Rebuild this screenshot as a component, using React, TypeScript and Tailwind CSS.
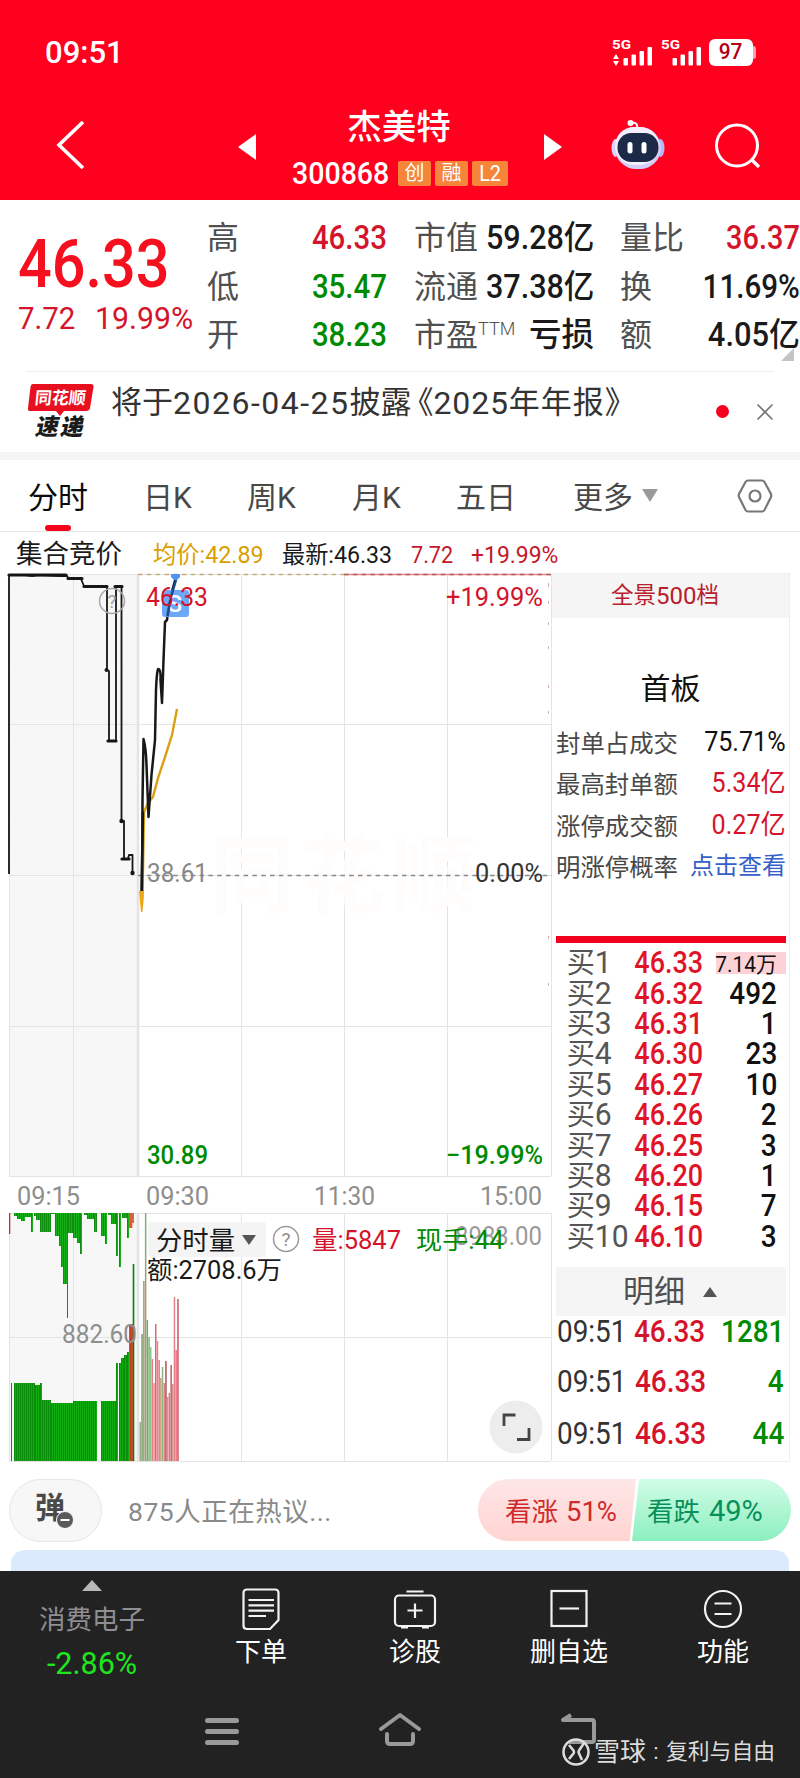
import React from 'react';
import { X } from 'lucide-react';

interface StatItem {
  label: string;
  sup?: string;
  value: string;
  color: string;
}

interface OrderRow {
  level: number;
  price: string;
  volume: string;
}

const RED = '#d4142a';
const GREEN = '#008a00';

const statColumns: { box: string; items: StatItem[] }[] = [
  {
    box: 'ml-[5px] w-[180px]',
    items: [
      { label: '高', value: '46.33', color: 'scale-x-[0.905] text-[#d4142a]' },
      { label: '低', value: '35.47', color: 'scale-x-[0.905] text-[#008a00]' },
      { label: '开', value: '38.23', color: 'scale-x-[0.905] text-[#008a00]' }
    ]
  },
  {
    box: 'ml-[27px] w-[180px]',
    items: [
      { label: '市值', value: '59.28亿', color: 'scale-x-[0.94] text-[#1a1a1a]' },
      { label: '流通', value: '37.38亿', color: 'scale-x-[0.94] text-[#1a1a1a]' },
      { label: '市盈', sup: 'TTM', value: '亏损', color: 'text-[#1a1a1a]' }
    ]
  },
  {
    box: 'ml-[26px] w-[180px]',
    items: [
      { label: '量比', value: '36.37', color: 'scale-x-[0.89] text-[#d4142a]' },
      { label: '换', value: '11.69%', color: 'scale-x-[0.91] text-[#1a1a1a]' },
      { label: '额', value: '4.05亿', color: 'scale-x-[0.95] text-[#1a1a1a]' }
    ]
  }
];

const boardStats = [
  { label: '封单占成交', value: '75.71%', color: 'text-[#111111]' },
  { label: '最高封单额', value: '5.34亿', color: 'text-[#d4142a]' },
  { label: '涨停成交额', value: '0.27亿', color: 'text-[#d4142a]' }
];

const orders: OrderRow[] = [
  { level: 1, price: '46.33', volume: '7.14万' },
  { level: 2, price: '46.32', volume: '492' },
  { level: 3, price: '46.31', volume: '1' },
  { level: 4, price: '46.30', volume: '23' },
  { level: 5, price: '46.27', volume: '10' },
  { level: 6, price: '46.26', volume: '2' },
  { level: 7, price: '46.25', volume: '3' },
  { level: 8, price: '46.20', volume: '1' },
  { level: 9, price: '46.15', volume: '7' },
  { level: 10, price: '46.10', volume: '3' }
];

const ticks = [
  { time: '09:51', price: '46.33', volume: '1281', height: 'h-[42px]' },
  { time: '09:51', price: '46.33', volume: '4', height: 'h-[58px]' },
  { time: '09:51', price: '46.33', volume: '44', height: 'h-[46px]' }
];

// [from x, to x, bottom y] of the bars that hang from the top of the volume pane
const unmatchedBars: [number, number, number][] = [
  [14, 17, 1216], [17, 21, 1219], [21, 25, 1221], [25, 31, 1217], [31, 33, 1232], [34, 36, 1216],
  [36, 40, 1220], [40, 51, 1232], [51, 55, 1214], [55, 59, 1236], [59, 61, 1246], [61, 63, 1267],
  [63, 67, 1284], [67, 68, 1318], [68, 73, 1233], [73, 77, 1238], [77, 80, 1243], [80, 82, 1254],
  [84, 87, 1215], [87, 94, 1219], [94, 97, 1232], [101, 105, 1236], [105, 107, 1244], [108, 111, 1215],
  [111, 116, 1224], [116, 118, 1256], [119, 121, 1267], [122, 127, 1218], [127, 129, 1238]
];

const matchedBars: [number, number, number][] = [
  [11, 12, 1383], [14, 35, 1383], [35, 40, 1385], [40, 42, 1383], [42, 51, 1400], [51, 73, 1403],
  [73, 97, 1401], [101, 116, 1401], [116, 118, 1363], [119, 121, 1363], [121, 124, 1358],
  [124, 127, 1355], [127, 129, 1352]
];

// [x, top y, colour]
const minuteBars: [number, number, string][] = [
  [139.5, 1422, '#8fb08a'], [141.3, 1334, '#7f9d6a'], [143.1, 1281, '#b89070'], [144.9, 1213, '#8ba780'],
  [146.6, 1320, '#6fae6c'], [148.3, 1337, '#7ab878'], [150, 1347, '#8fc58c'], [151.6, 1359, '#e58088'],
  [153.3, 1383, '#f08a92'], [155, 1324, '#d76a72'], [156.7, 1341, '#ec7f88'], [158.4, 1360, '#e27880'],
  [160.1, 1378, '#c9a080'], [161.8, 1367, '#92b583'], [163.5, 1383, '#e58088'], [165.2, 1361, '#b05058'],
  [166.9, 1397, '#ee8890'], [168.6, 1393, '#e27880'], [170.4, 1365, '#b8626a'], [172.1, 1384, '#d49080'],
  [173.7, 1297, '#e08088'], [175.4, 1350, '#f0707c'], [177.2, 1299, '#cc5560']
];

const navItems = ['下单', '诊股', '删自选', '功能'];

const SignalIcon: React.FC<{ arrows?: boolean }> = ({ arrows }) => (
  <svg className="overflow-visible" width="41" height="28" viewBox="0 0 41 28" fill="#fff">
    <text x="0" y="11" fontSize="13.5" fontWeight="700" fontFamily="Roboto, sans-serif" textLength="19" lengthAdjust="spacingAndGlyphs">5G</text>
    {arrows && <path d="M1 21 L4 16 L7 21 Z M1 23 L4 28 L7 23 Z" />}
    <rect x="11.5" y="20" width="4.5" height="7.5" rx="1" />
    <rect x="19.5" y="16.5" width="4.5" height="11" rx="1" />
    <rect x="27.5" y="13" width="4.5" height="14.5" rx="1" />
    <rect x="35.5" y="9" width="4.5" height="18.5" rx="1" />
  </svg>
);

const RobotIcon = () => (
  <svg width="56" height="52" viewBox="0 0 56 52">
    <path d="M27 10 C28 5 26 3 21 4" stroke="#efeafe" strokeWidth="2" fill="none" />
    <circle cx="20.500" cy="4" r="3" fill="#fff" />
    <ellipse cx="5.500" cy="29" rx="4" ry="9" fill="#d9d2fa" />
    <ellipse cx="50.500" cy="29" rx="4" ry="9" fill="#b8b6fb" />
    <rect x="5" y="8" width="46" height="42" rx="21" fill="#d4cefa" />
    <rect x="5" y="8" width="44" height="38" rx="19" fill="#f3effe" />
    <rect x="7.500" y="14" width="41" height="29" rx="14" fill="#1c2947" />
    <rect x="17.500" y="23" width="5" height="11.500" rx="2.500" fill="#fff" />
    <rect x="31.500" y="23" width="5" height="11.500" rx="2.500" fill="#fff" />
  </svg>
);

const NavIcon: React.FC<{ name: string }> = ({ name }) => (
  <svg width="44" height="44" viewBox="0 0 44 44" fill="none" stroke="#f2f2f2" strokeWidth="2.2">
    {name === '下单' && (
      <>
        <path d="M8 2.500 H36 Q39.500 2.500 39.500 6 V33 L31 42 H8 Q4.500 42 4.500 38.500 V6 Q4.500 2.500 8 2.500 Z" />
        <path d="M9.500 13 H35 M9.500 18.300 H35 M9.500 23.600 H35 M9.500 29 H27" />
      </>
    )}
    {name === '诊股' && (
      <>
        <rect x="2" y="8.500" width="40" height="30.500" rx="4" />
        <path d="M13.500 4.500 H30.500 M22 16.500 V31 M14.500 23.500 H29.500 M8 40.500 H15 M29 40.500 H36" />
      </>
    )}
    {name === '删自选' && (
      <>
        <rect x="4.500" y="4" width="35" height="35" />
        <path d="M12.500 21.500 H32" />
      </>
    )}
    {name === '功能' && (
      <>
        <circle cx="22" cy="22" r="18" />
        <path d="M13.500 16.500 H30.500 M13.500 27 H30.500" />
      </>
    )}
  </svg>
);

const Header = () => (
  <div className="h-[200px] bg-[#ff001e] text-white">
    <div className="flex h-[104px] items-center pl-[45px]">
      <span className="w-[567px] origin-left scale-x-[0.97] text-[32px] leading-none font-medium">09:51</span>
      <SignalIcon arrows />
      <span className="ml-2">
        <SignalIcon />
      </span>
      <div className="ml-[7px] flex h-[27px] w-[44px] items-center justify-center rounded-[6px] bg-white text-[22px] leading-none font-medium text-[#b00016]">
        <span className="scale-x-95">97</span>
      </div>
      <div className="h-[13px] w-[3px] rounded-r-full bg-[#ff9da8]" />
    </div>
    <div className="flex h-[96px]">
      <svg className="mt-[17px] ml-[56px]" width="28" height="48" viewBox="0 0 28 48">
        <path d="M27 1 L3 24 L27 47" stroke="#fff" strokeWidth="3.6" fill="none" />
      </svg>
      <svg className="mt-[30px] ml-[154px]" width="18" height="26" viewBox="0 0 18 26">
        <path d="M18 0 V26 L0 13 Z" fill="#fff" />
      </svg>
      <div className="flex w-[288px] flex-col items-center">
        <span className="mt-[5px] pr-[2px] text-[34.5px] leading-[36px] font-medium">杰美特</span>
        <div className="mt-[15px] flex h-[26px] items-center gap-[4px]">
          <span className="mr-[-2px] w-[104px] origin-left scale-x-[0.92] text-[31px] leading-none font-medium">300868</span>
          <span className="flex h-[25px] w-[33px] items-center justify-center rounded-[2px] bg-[#f6853a] text-[20px]">创</span>
          <span className="flex h-[25px] w-[33px] items-center justify-center rounded-[2px] bg-[#f6853a] text-[20px]">融</span>
          <span className="flex h-[25px] w-[36px] items-center justify-center rounded-[2px] bg-[#f6853a] text-[22px]">
            <span className="scale-x-90">L2</span>
          </span>
        </div>
      </div>
      <svg className="mt-[30px]" width="18" height="26" viewBox="0 0 18 26">
        <path d="M0 0 V26 L18 13 Z" fill="#fff" />
      </svg>
      <div className="mt-[15px] ml-[48px]">
        <RobotIcon />
      </div>
      <svg className="mt-[18px] ml-[47px]" width="50" height="50" viewBox="0 0 50 50">
        <circle cx="24" cy="23.500" r="20.500" stroke="#fff" strokeWidth="3" fill="none" />
        <path d="M38 37 L46 45" stroke="#fff" strokeWidth="3.4" />
      </svg>
    </div>
  </div>
);

const Quote = () => (
  <div className="relative flex h-[171px] pt-[14px]">
    <div className="w-[203px] pl-[18px]">
      <div className="mt-[18px] origin-left scale-x-[0.9] text-[66px] leading-[66px] font-medium text-[#f5101f]">46.33</div>
      <div className="mt-[4px] flex text-[32px] leading-[32px] text-[#d4142a]">
        <span className="w-[77px] origin-left scale-x-[0.92]">7.72</span>
        <span className="origin-left scale-x-[0.945]">19.99%</span>
      </div>
    </div>
    {statColumns.map((col, index) => (
      <div key={index} className={`shrink-0 ${col.box}`}>
        {col.items.map((item) => (
          <div key={item.label} className="flex h-[48.5px] items-center justify-between text-[32px] leading-none whitespace-nowrap">
            <span className="flex text-[#505050]">
              {item.label}
              {item.sup && <span className="pt-px text-[18px] font-light">{item.sup}</span>}
            </span>
            <span className={`origin-right text-[32.5px] font-medium ${item.color}`}>{item.value}</span>
          </div>
        ))}
      </div>
    ))}
    <svg className="absolute top-[148px] left-[781px]" width="13" height="13">
      <path d="M13 0 V13 H0 Z" fill="#c4c4c4" />
    </svg>
  </div>
);

const NewsBar = () => (
  <div className="mx-[26px] flex h-[81px] border-t border-[#efefef]">
    <div className="relative mt-3 ml-[2px] h-[56px] w-[66px] shrink-0">
      <svg className="absolute inset-0" width="66" height="34">
        <path d="M5 0 H63 Q66 0 65.500 3 L62 24 Q61.500 27 58 27 H36 L32 32 L28 27 H2 Q-.5 27 0 24 L2.500 3 Q3 0 5 0 Z" fill="#e8101f" />
      </svg>
      <span className="absolute top-[4px] left-[7px] -skew-x-6 text-[17px] leading-[20px] font-bold text-white">同花顺</span>
      <span className="absolute top-[33px] left-[8px] -skew-x-12 text-[23px] leading-[22px] font-black tracking-[2px] text-[#1b1b1b]">速递</span>
    </div>
    <div className="mt-[12px] ml-[17px] flex w-[605px] shrink-0 text-[31px] leading-[38px] whitespace-nowrap text-[#333333]">
      <span>将于</span>
      <span className="text-[32px] tracking-[1.5px]">2026-04-25</span>
      <span>披露</span>
      <span className="-ml-[9px]">《</span>
      <span className="text-[32px] tracking-[0.8px]">2025</span>
      <span className="tracking-[1px]">年年报》</span>
    </div>
    <div className="mt-[33px] h-[13px] w-[13px] shrink-0 rounded-full bg-[#f5001d]" />
    <X className="mt-[26px] ml-[22px] h-[28px] w-[28px] shrink-0 text-[#777777]" strokeWidth={1.5} />
  </div>
);

const ChartTabs = () => (
  <div className="flex h-[72px] border-b border-[#e6e6e6] text-[29px] leading-[75px] text-[#484848]">
    <div className="relative ml-[28px] w-[115px] text-[30px] text-[#0a0a0a]">
      分时
      <div className="absolute top-[65px] left-[17px] h-[6px] w-[26px] rounded-[3px] bg-[#f5001d]" />
    </div>
    <span className="w-[104px] text-[30px]">日K</span>
    <span className="w-[105px] text-[30px]">周K</span>
    <span className="w-[104px] text-[30px]">月K</span>
    <span className="w-[117px] text-[30px]">五日</span>
    <span className="w-[69px] text-[30px]">更多</span>
    <svg className="mt-[29px]" width="16" height="13">
      <path d="M0 0 H16 L8 13 Z" fill="#9a9a9a" />
    </svg>
    <svg className="mt-[18px] ml-[79px]" width="36" height="36" viewBox="0 0 36 36" fill="none" stroke="#777" strokeWidth="2.200">
      <path d="M11 2.500 H25 Q26.500 2.500 27.500 4 L34 16 Q34.500 17.500 34 19 L27.500 32 Q26.500 33.500 25 33.500 H11 Q9.500 33.500 8.500 32 L2 19 Q1.500 17.500 2 16 L8.500 4 Q9.500 2.500 11 2.500 Z" />
      <circle cx="18" cy="18" r="5.500" />
    </svg>
  </div>
);

const QuoteLine = () => (
  <div className="flex h-[42px] items-center pt-[3px] pl-[16px] text-[24px] leading-none whitespace-nowrap text-[#1a1a1a]">
    <span className="w-[137px] text-[26.5px]">集合竞价</span>
    <span className="w-[129px] origin-left scale-x-[0.97] text-[#d9a000]">均价:42.89</span>
    <span className="w-[129px] origin-left scale-x-[0.965]">最新:46.33</span>
    <span className="w-[60px] origin-left scale-x-[0.9] text-[#c4182a]">7.72</span>
    <span className="origin-left scale-x-[0.955] text-[#c4182a]">+19.99%</span>
  </div>
);

interface LabelProps {
  x: number;
  y: number;
  w: number;
  fill: string;
  size?: number;
  weight?: number;
  children: string;
}

const Label: React.FC<LabelProps> = ({ x, y, w, fill, size = 26, weight = 400, children }) => (
  <text x={x} y={y} textLength={w} lengthAdjust="spacingAndGlyphs" fontSize={size} fontWeight={weight} fill={fill}>
    {children}
  </text>
);

// Splits a wide block of the volume pane into single 2px bars
const slices = (from: number, to: number) => {
  const list: number[] = [];
  for (let x = from; x < to; x += 2) {
    list.push(x);
  }
  return list;
};

const Charts = () => (
  <svg className="block shrink-0" width="552" height="889" viewBox="0 573 552 889" fontFamily='Roboto, "Noto Sans CJK SC", sans-serif'>
    <rect x="9" y="574" width="129" height="602" fill="#f7f7f7" />
    <rect x="9" y="1213" width="129" height="248" fill="#f7f7f7" />
    <g stroke="#e4e4e4" strokeWidth="1">
      {[9.5, 73.5, 241.5, 344.5, 447.5, 551.5].map((x) => (
        <path key={x} d={`M${x} 574 V1176 M${x} 1213 V1461`} />
      ))}
      {[574.5, 724.5, 875.5, 1026.5, 1176.5, 1213.5, 1337.5, 1461.5].map((y) => (
        <path key={y} d={`M9 ${y} H551`} />
      ))}
      <path d="M138 574 V1176 M138 1213 V1461" strokeWidth="2.500" />
    </g>
    <text x="210" y="906" fontSize="84" fontWeight="700" textLength="266" fill="#fffcfc">同花顺</text>

    <path d="M138 574.500 H344" stroke="#c9a878" strokeWidth="1.500" strokeDasharray="4.500 4.300" />
    <path d="M344 574.500 H551" stroke="#ef8088" strokeWidth="1.500" />
    <path d="M344 574.500 H551" stroke="#a86058" strokeWidth="1.500" strokeDasharray="4.500 4.300" />
    <path d="M138 875.500 H552" stroke="#888" strokeWidth="1.300" strokeDasharray="4.500 4.300" />
    <path d="M548.500 583 v4 M548.500 601 v3 M548.500 622 v3 M548.500 646 v3 M548.500 685 v3 M548.500 711 v3 M548.500 936 v3 M548.500 983 v3" stroke="#d8b0b4" />

    {/* Opening auction */}
    <path
      d="M9 874 V575 H25 L32 576 L38 575 L60 576 H67 L69 579 H81 L84 586 H106 L107 587 V670 L109 671 V741 H116 V586 H121.500 V821 H124 V859 H128 L129 855 H132.500 V873"
      fill="none"
      stroke="#161616"
      strokeWidth="1.800"
      strokeLinejoin="round"
    />
    <path d="M9 575 H66 M68 578.500 H82 M84 586.500 H107 M115 586.500 H122 M108 741 H116 M122 859 H129" stroke="#161616" strokeWidth="3.200" strokeLinecap="round" />
    <circle cx="106.500" cy="670" r="2" fill="#161616" />
    <circle cx="121.500" cy="821" r="2.200" fill="#161616" />
    <circle cx="132.500" cy="873" r="2.200" fill="#161616" />

    {/* Average and last price */}
    <path d="M142 905 L143 870 L144 812 L148 803 L153 797 L158 778 L165 757 L172 735 L177 709" fill="none" stroke="#dba012" strokeWidth="2.400" />
    <path d="M139 891 H144 L142.500 912 H141 Z" fill="#eda614" />
    <path
      d="M142 891 L142.500 800 L143.500 739 Q146 748 146.500 765 L148.500 817 L151.500 775 L155 740 L156 690 Q157 668 158.500 669 Q161 670 160.500 680 L162 703 L163.500 660 L165 622 L167 620 L169 602 L176 577"
      fill="none"
      stroke="#181818"
      strokeWidth="2.500"
      strokeLinejoin="round"
    />
    <path d="M141.500 891 L143 812" stroke="#181818" strokeWidth="2.500" />

    <rect x="162" y="590" width="27" height="27" rx="3" fill="#5c9ff6" fillOpacity="0.900" />
    <text x="167.500" y="612" fontSize="24" fill="#fff" fontWeight="500">S</text>
    <path d="M171 574 H180 V577 L177 580 H174 L171 577 Z" fill="#4d94f5" />
    <path d="M176 580 L171 597 L167.500 616" stroke="#1d4a8c" strokeWidth="2.500" fill="none" />
    <circle cx="112" cy="601" r="12.500" fill="none" stroke="#a8a8a8" strokeWidth="1.500" />
    <text x="107.500" y="608" fontSize="19" fill="#a0a0a0">?</text>

    <Label x={146} y={605.5} w={62} fill={RED}>46.33</Label>
    <Label x={446} y={605.5} w={97} fill={RED}>+19.99%</Label>
    <Label x={147} y={881.5} w={61} fill="#888">38.61</Label>
    <Label x={475} y={882} w={68} fill="#333">0.00%</Label>
    <Label x={147} y={1164} w={61} fill={GREEN} weight={500}>30.89</Label>
    <Label x={446} y={1164} w={97} fill={GREEN} weight={500}>−19.99%</Label>

    <Label x={17} y={1205} w={63} fill="#8e8e8e">09:15</Label>
    <Label x={146} y={1204.5} w={63} fill="#8e8e8e">09:30</Label>
    <Label x={314} y={1204.5} w={61} fill="#8e8e8e">11:30</Label>
    <Label x={480} y={1204.5} w={62} fill="#8e8e8e">15:00</Label>

    {/* Volume */}
    {unmatchedBars.map(([from, to, y]) => (
      <g key={from}>
        <rect x={from} y="1213" width={to - from} height={y - 1213} fill="#18b018" />
        {slices(from, to).map((x) => (
          <rect key={x} x={x} y="1213" width="0.600" height={y - 1213} fill="#0a7a0a" />
        ))}
      </g>
    ))}
    {matchedBars.map(([from, to, y]) => (
      <g key={from}>
        <rect x={from} y={y} width={to - from} height={1461 - y} fill="#10ac10" />
        {slices(from, to).map((x) => (
          <rect key={x} x={x} y={y} width="0.600" height={1461 - y} fill="#067c06" />
        ))}
      </g>
    ))}
    <rect x="9" y="1213" width="1.300" height="21" fill="#c8283a" />
    <rect x="129" y="1213" width="3.300" height="15" fill="#ee5528" />
    <rect x="132.300" y="1213" width="1.500" height="10" fill="#b04a20" />
    <rect x="129" y="1324" width="4" height="137" fill="#e8492c" />
    <rect x="130.500" y="1324" width="0.800" height="137" fill="#a03020" />
    <rect x="132.700" y="1264" width="1.600" height="197" fill="#0b7d14" />
    {minuteBars.map(([x, y, fill]) => (
      <rect key={x} x={x} y={y} width="1.500" height={1461 - y} fill={fill} />
    ))}
    <Label x={62} y={1343} w={75} fill="#8e8e8e">882.60</Label>

    <rect x="148" y="1222" width="118" height="35" rx="3" fill="#f4f4f4" />
    <Label x={156} y={1250} w={79} fill="#1a1a1a">分时量</Label>
    <path d="M242 1235 H256 L249 1245 Z" fill="#555" />
    <circle cx="286" cy="1239" r="12.500" fill="none" stroke="#9a9a9a" strokeWidth="1.500" />
    <text x="281.500" y="1246" fontSize="19" fill="#8e8e8e">?</text>
    <Label x={455} y={1245} w={87} fill="#9a9a9a">8983.00</Label>
    <Label x={312} y={1249} w={89} fill={RED} size={25}>量:5847</Label>
    <Label x={416} y={1249} w={88} fill={GREEN} size={25}>现手:44</Label>
    <Label x={147} y={1278.5} w={135} fill="#1a1a1a" size={25}>额:2708.6万</Label>

    <circle cx="516" cy="1427" r="26.500" fill="#ededed" />
    <path d="M504 1426 V1415 H515.500 M529 1428 V1439.500 H517" fill="none" stroke="#444" strokeWidth="2.800" />
  </svg>
);

const OrderBook = () => (
  <div className="h-[889px] w-[238px] shrink-0 border-t border-r border-b border-[#eeeeee]">
    <div className="flex h-[44px] items-center justify-center bg-[#f5f5f5] pr-[11px] text-[22.5px] text-[#b8202c]">
      全景<span className="text-[24px]">500</span>档
    </div>
    <div className="mt-[50px] text-center text-[30px] leading-[42px] text-[#111111]">首板</div>
    <div className="mt-[13px] pr-[3px] pl-1">
      {boardStats.map((item) => (
        <div key={item.label} className="flex h-[41.5px] items-center justify-between text-[24.4px] leading-none whitespace-nowrap">
          <span className="text-[#484848]">{item.label}</span>
          <span className={`mb-[3px] origin-right scale-x-[0.93] text-[27px] ${item.color}`}>{item.value}</span>
        </div>
      ))}
      <div className="flex h-[41px] items-center justify-between text-[24.4px] leading-none whitespace-nowrap">
        <span className="text-[#484848]">明涨停概率</span>
        <span className="mb-1 text-[24px] text-[#3560c8]">点击查看</span>
      </div>
    </div>
    <div className="mt-[47px] mr-[3px] ml-1 h-[7px] bg-[#f2001d]" />
    <div className="mt-[5px] mr-[3px] ml-1">
      {orders.map((row) => (
        <div key={row.level} className="flex h-[30.4px] items-center text-[31px] leading-none whitespace-nowrap">
          <span className="w-[67px] origin-left scale-x-[0.97] pl-[11px] text-[29px] text-[#555555]">
            买<span className="text-[31px]">{row.level}</span>
          </span>
          <span className="w-[70px] origin-left scale-x-[0.87] pl-[13px] font-medium text-[#e01428]">{row.price}</span>
          {row.level === 1 ? (
            <span className="ml-auto flex h-[22px] w-[70px] items-center justify-end bg-[#fcd2d6] pt-[4px] pr-[9px] text-[22px] text-[#111111]">
              <span className="origin-right scale-x-[0.95]">{row.volume}</span>
            </span>
          ) : (
            <span className="mr-[9px] ml-auto origin-right scale-x-[0.9] font-medium text-[#111111]">{row.volume}</span>
          )}
        </div>
      ))}
    </div>
    <div className="mt-[16px] mr-[3px] ml-1 flex h-[49px] items-center bg-[#f5f5f5] pl-[67px] text-[31px] text-[#505050]">
      明细
      <svg className="ml-[18px]" width="14" height="10">
        <path d="M7 0 L14 10 H0 Z" fill="#555" />
      </svg>
    </div>
    <div className="mt-[-6px] pr-[5px] pl-[5px] text-[31px] leading-none">
      {ticks.map((tick, index) => (
        <div key={index} className={`flex items-center ${tick.height}`}>
          <span className="w-[78px] origin-left scale-x-[0.9] text-[#333333]">{tick.time}</span>
          <span className="w-[80px] origin-left scale-x-[0.9] font-medium text-[#d4142a]">{tick.price}</span>
          <span className="ml-auto origin-right scale-x-[0.9] font-medium text-[#008a00]">{tick.volume}</span>
        </div>
      ))}
    </div>
  </div>
);

const CommentBar = () => (
  <div className="flex h-[88px] pt-[17px]">
    <div className="relative ml-[9px] h-[63px] w-[93px] rounded-full border border-[#e6e6ea] bg-[#f7f7f7]">
      <span className="absolute top-[11px] left-[25px] text-[30px] leading-[34px] font-bold text-[#4a4a4a]">弹</span>
      <svg className="absolute top-[31px] left-[46px]" width="18" height="18">
        <circle cx="9" cy="9" r="8.500" fill="#5a5a5a" stroke="#f7f7f7" />
        <path d="M4.500 9 H13.500" stroke="#fff" strokeWidth="2" />
      </svg>
    </div>
    <span className="mt-[15px] ml-[26px] w-[350px] text-[26.5px] leading-[36px] tracking-[0.5px] text-[#8a8a8a]">875人正在热议...</span>
    <div className="flex h-[62px] w-[158px] items-center justify-end rounded-l-full bg-linear-to-b from-[#fee6e7] to-[#ffd4d1] pt-[3px] pr-[19px] text-[26.5px] whitespace-nowrap text-[#d02a2c] [clip-path:polygon(0_0,100%_0,96%_100%,0_100%)]">
      看涨<span className="ml-2 text-[27.5px]">51%</span>
    </div>
    <div className="-ml-[4px] flex h-[62px] w-[159px] items-center rounded-r-full bg-linear-to-b from-[#d0fde6] to-[#8aefc0] pt-[3px] pl-[15px] text-[26.5px] whitespace-nowrap text-[#07905a] [clip-path:polygon(4.5%_0,100%_0,100%_100%,0_100%)]">
      看跌<span className="ml-[9px] text-[29px]">49%</span>
    </div>
  </div>
);

const BottomNav = () => (
  <div className="relative h-[207px] bg-[#222222] text-[26px]">
    <div className="flex h-[120px] text-white">
      <div className="flex w-[184px] flex-col items-center">
        <svg className="mt-[9px]" width="20" height="11">
          <path d="M10 0 L20 11 H0 Z" fill="#b8b8b8" />
        </svg>
        <span className="mt-[10px] text-[26.5px] leading-[38px] text-[#8e8e93]">消费电子</span>
        <span className="mt-[7px] text-[30.5px] leading-[36px] text-[#1ee61e]">-2.86%</span>
      </div>
      {navItems.map((name) => (
        <div key={name} className="flex w-[154px] flex-col items-center">
          <div className="mt-[16px] h-[44px]">
            <NavIcon name={name} />
          </div>
          <span className="mt-[2px] leading-[38px]">{name}</span>
        </div>
      ))}
    </div>
    <div className="flex pt-[20px]">
      <svg className="ml-[205px]" width="34" height="38" stroke="#999" strokeWidth="5" strokeLinecap="round">
        <path d="M2.500 9.500 H31.500 M2.500 20.500 H31.500 M2.500 31.500 H31.500" />
      </svg>
      <svg className="ml-[139px]" width="44" height="38" fill="none" stroke="#999" strokeWidth="4" strokeLinecap="round" strokeLinejoin="round">
        <path d="M3 18 L22 4 L41 18 M9 23 V30 Q9 33 12 33 H32 Q35 33 35 30 V23" />
      </svg>
      <svg className="ml-[137px]" width="40" height="38" fill="none" stroke="#999" strokeWidth="4" strokeLinejoin="round">
        <path d="M12 4 L4 9 H33 Q35 9 35 11 V29 Q35 31 33 31 H10" />
      </svg>
    </div>
    <div className="absolute top-[164px] left-[561px] flex items-center whitespace-nowrap text-[#dcdcdc]">
      <svg width="30" height="30" viewBox="0 0 30 30" fill="none" stroke="#dcdcdc" strokeWidth="2.500">
        <circle cx="15" cy="15" r="12.500" />
        <path d="M8 8 L12.500 13.500 Q13.500 15 12.500 16.500 L8 22 M23 6 L18 13.500 Q17 15 18 16.500 L21 23" strokeWidth="2.600" />
      </svg>
      <span className="ml-[3px] text-[26px] leading-[34px]">雪球</span>
      <span className="w-[20px] text-center text-[22px] leading-[34px]">:</span>
      <span className="text-[21.8px] leading-[34px]">复利与自由</span>
    </div>
  </div>
);

const App: React.FC = () => {
  return (
    <div className="h-[1778px] w-[800px] overflow-hidden bg-white font-[Roboto,'Noto_Sans_CJK_SC',sans-serif]">
      <Header />
      <Quote />
      <NewsBar />
      <div className="h-[8px] bg-[#f5f5f5]" />
      <ChartTabs />
      <QuoteLine />
      <div className="mt-[-1px] flex">
        <Charts />
        <OrderBook />
      </div>
      <CommentBar />
      <div className="mx-[11px] h-[21px] rounded-t-[14px] bg-[#dbeafd]" />
      <BottomNav />
    </div>
  );
};

export default App;
